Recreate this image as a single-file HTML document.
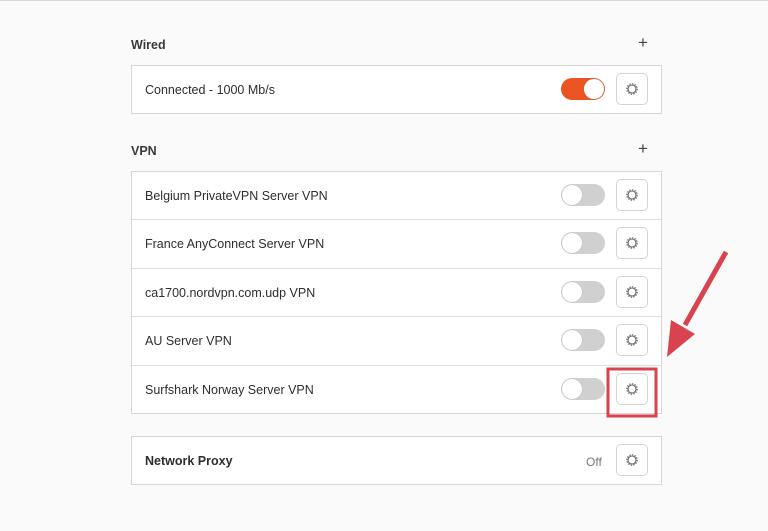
<!DOCTYPE html>
<html><head><style>
body{margin:0;width:768px;height:531px;background:#fafafa;font-family:"Liberation Sans",sans-serif;color:#2e2e2e;position:relative;overflow:hidden}
.topline{position:absolute;left:0;top:0;width:768px;height:1px;background:#d8d8d8}
.h{position:absolute;left:131px;font-size:12.5px;font-weight:bold;color:#3a3a3a}
.plus{position:absolute;left:638px;font-size:17px;color:#444;font-weight:300}
.panel{position:absolute;left:131px;width:529px;background:#fff;border:1px solid #d6d6d6}
.row{position:relative;height:48.4px;box-sizing:border-box;border-top:1px solid #e0e0e0}
.row:first-child{border-top:none;height:47.4px}
.t{position:absolute;left:13px;top:17px;font-size:12.5px}
.tg{position:absolute;left:429px;top:12px;width:44px;height:22px;border-radius:11px;background:#d0d0d0}
.tg::after{content:"";position:absolute;left:1px;top:1px;width:20px;height:20px;border-radius:50%;background:#fff;box-shadow:0 0 1px #999}
.tg.on{background:#e95420}
.tg.on::after{left:23px}
.gb{position:absolute;left:484px;top:7px;width:30px;height:30px;border:1px solid #d4d4d4;border-radius:5px;background:#fff;display:flex;align-items:center;justify-content:center}
</style></head><body>
<div class="topline"></div>
<svg width="0" height="0" style="position:absolute"><defs><g id="gear"><circle cx="7" cy="7" r="4" fill="none" stroke="#666" stroke-width="1.1"/><circle cx="7" cy="7" r="5.2" fill="none" stroke="#666" stroke-width="1.2" stroke-dasharray="1.4 1.3"/></g></defs></svg>
<div class="h" style="top:38px">Wired</div><div class="plus" style="top:33px">+</div>
<div class="panel" style="top:65px"><div class="row"><span class="t">Connected - 1000 Mb/s</span><div class="tg on"></div><div class="gb"><svg width="14" height="14"><use href="#gear"/></svg></div></div></div>
<div class="h" style="top:144px">VPN</div><div class="plus" style="top:139px">+</div>
<div class="panel" style="top:171px">
<div class="row"><span class="t">Belgium PrivateVPN Server VPN</span><div class="tg"></div><div class="gb"><svg width="14" height="14"><use href="#gear"/></svg></div></div>
<div class="row"><span class="t">France AnyConnect Server VPN</span><div class="tg"></div><div class="gb"><svg width="14" height="14"><use href="#gear"/></svg></div></div>
<div class="row"><span class="t">ca1700.nordvpn.com.udp VPN</span><div class="tg"></div><div class="gb"><svg width="14" height="14"><use href="#gear"/></svg></div></div>
<div class="row"><span class="t">AU Server VPN</span><div class="tg"></div><div class="gb"><svg width="14" height="14"><use href="#gear"/></svg></div></div>
<div class="row"><span class="t">Surfshark Norway Server VPN</span><div class="tg"></div><div class="gb"><svg width="14" height="14"><use href="#gear"/></svg></div></div>
</div>
<div class="panel" style="top:436px"><div class="row"><span class="t" style="font-weight:bold">Network Proxy</span><span style="position:absolute;left:454px;top:18px;font-size:12px;color:#777">Off</span><div class="gb"><svg width="14" height="14"><use href="#gear"/></svg></div></div></div>
<svg style="position:absolute;left:0;top:0" width="768" height="531">
<rect x="608" y="369" width="48" height="47" fill="none" stroke="#d9434f" stroke-width="3"/>
<line x1="726" y1="252" x2="685" y2="325" stroke="#d9434f" stroke-width="5"/>
<polygon points="667,357 671,320 695,334" fill="#d9434f"/>
</svg>
</body></html>
